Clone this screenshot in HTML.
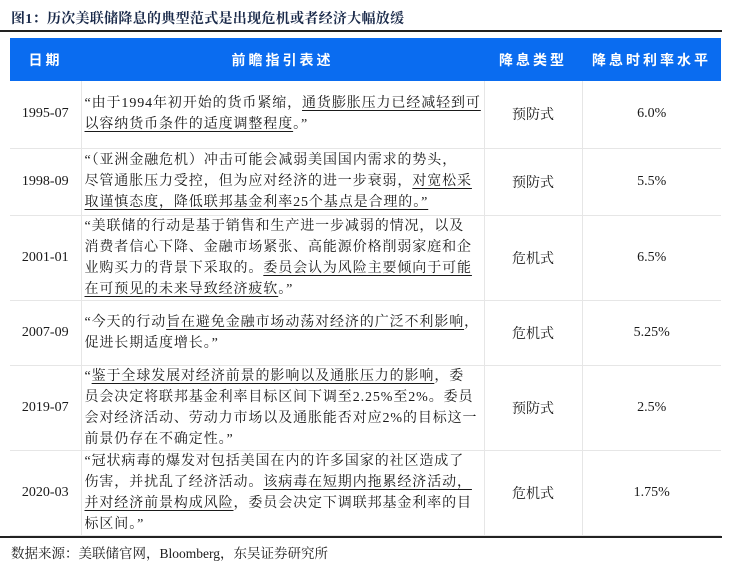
<!DOCTYPE html>
<html><head><meta charset="utf-8"><style>
body{margin:0;width:740px;height:561px;background:#fff;font-family:"Liberation Serif","Noto Serif CJK SC",serif;color:#1a1a1a;position:relative;overflow:hidden}
.title{position:absolute;left:11px;top:8px;font-size:14px;font-weight:bold;color:#1a2a4a;white-space:nowrap;letter-spacing:0.3px}
.hr1{position:absolute;left:0;top:30px;width:722px;height:2px;background:#222}
.hr2{position:absolute;left:0;top:536px;width:722px;height:2px;background:#222}
table{position:absolute;left:10px;top:38px;border-collapse:collapse;width:711px;table-layout:fixed}
th{background:#0a6cf0;color:#fff;height:43px;font-family:"Liberation Sans","Noto Sans CJK SC",sans-serif;font-size:14px;font-weight:bold;letter-spacing:3px;padding:0}
td{border-bottom:1px solid #e6e6e6;border-right:1px solid #e6e6e6;font-size:14px;text-align:center;padding:0}
td:last-child{border-right:none}
td.t{text-align:left;padding-left:3px;line-height:21px;letter-spacing:0.9px;white-space:nowrap;font-size:14px}
u{text-decoration:underline;text-underline-offset:3px}
.src{position:absolute;left:11px;top:542px;font-size:13.5px;white-space:nowrap}
</style></head><body>
<div class="title">图1：历次美联储降息的典型范式是出现危机或者经济大幅放缓</div>
<div class="hr1"></div>
<table>
<colgroup><col style="width:71px"><col style="width:403px"><col style="width:98px"><col style="width:139px"></colgroup>
<tr><th>日期</th><th>前瞻指引表述</th><th>降息类型</th><th>降息时利率水平</th></tr>
<tr style="height:67px"><td>1995-07</td><td class="t">“由于1994年初开始的货币紧缩，<u>通货膨胀压力已经减轻到可<br>以容纳货币条件的适度调整程度</u>。”</td><td>预防式</td><td>6.0%</td></tr>
<tr style="height:67px"><td>1998-09</td><td class="t">“（亚洲金融危机）冲击可能会减弱美国国内需求的势头，<br>尽管通胀压力受控，但为应对经济的进一步衰弱，<u>对宽松采<br>取谨慎态度，降低联邦基金利率25个基点是合理的。”</u></td><td>预防式</td><td>5.5%</td></tr>
<tr style="height:85px"><td>2001-01</td><td class="t">“美联储的行动是基于销售和生产进一步减弱的情况，以及<br>消费者信心下降、金融市场紧张、高能源价格削弱家庭和企<br>业购买力的背景下采取的。<u>委员会认为风险主要倾向于可能<br>在可预见的未来导致经济疲软</u>。”</td><td>危机式</td><td>6.5%</td></tr>
<tr style="height:65px"><td>2007-09</td><td class="t">“今天的行动<u>旨在避免金融市场动荡对经济的广泛不利影响</u>，<br>促进长期适度增长。”</td><td>危机式</td><td>5.25%</td></tr>
<tr style="height:85px"><td>2019-07</td><td class="t">“<u>鉴于全球发展对经济前景的影响以及通胀压力的影响</u>，委<br>员会决定将联邦基金利率目标区间下调至2.25%至2%。委员<br>会对经济活动、劳动力市场以及通胀能否对应2%的目标这一<br>前景仍存在不确定性。”</td><td>预防式</td><td>2.5%</td></tr>
<tr style="height:81px"><td>2020-03</td><td class="t">“冠状病毒的爆发对包括美国在内的许多国家的社区造成了<br>伤害，并扰乱了经济活动。<u>该病毒在短期内拖累经济活动，<br>并对经济前景构成风险</u>，委员会决定下调联邦基金利率的目<br>标区间。”</td><td>危机式</td><td>1.75%</td></tr>
</table>
<div class="hr2"></div>
<div class="src">数据来源：美联储官网，Bloomberg，东吴证券研究所</div>
</body></html>
